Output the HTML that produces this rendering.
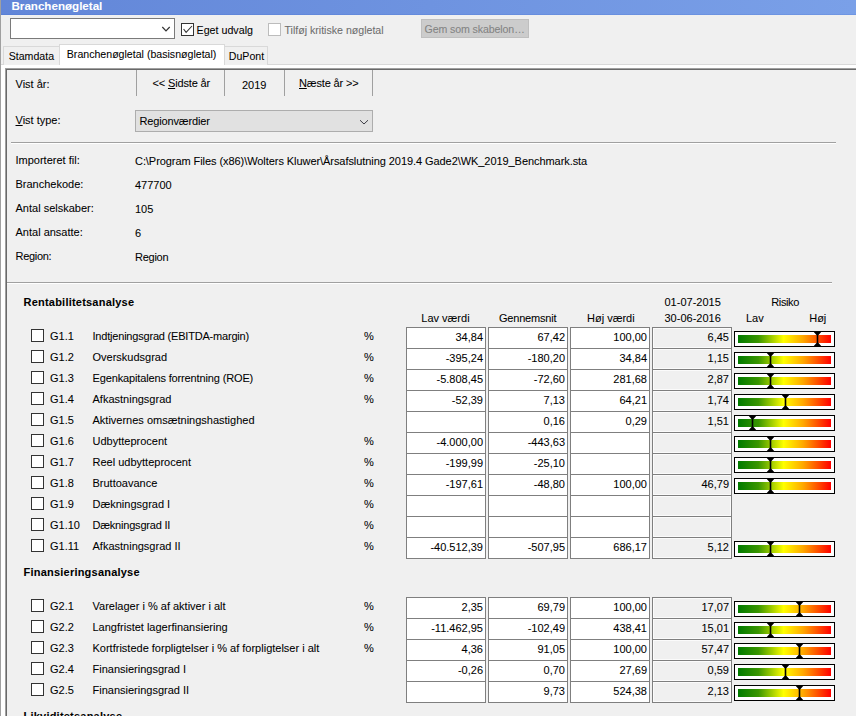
<!DOCTYPE html>
<html><head><meta charset="utf-8"><style>
html,body{margin:0;padding:0;}
body{width:856px;height:716px;overflow:hidden;position:relative;background:#f0f0f0;font-family:"Liberation Sans",sans-serif;}
.t{position:absolute;white-space:pre;-webkit-text-stroke:0.06px currentColor;}
.r{position:absolute;}
u{text-decoration:underline;text-underline-offset:1px;}
</style></head><body>
<div class="r" style="left:0px;top:0px;width:1px;height:716px;background:#a0a0a0"></div>
<div class="r" style="left:1px;top:0px;width:855px;height:15px;background:linear-gradient(to right,#6286d8,#7aa0e8)"></div>
<div class="r" style="left:1px;top:14px;width:855px;height:1px;background:linear-gradient(to right,#5a80d6,#6f96e3)"></div>
<div class="t" style="left:11.5px;top:-0.52px;font-size:11.6px;line-height:14px;color:#fff;font-weight:bold;">Branchenøgletal</div>
<div class="r" style="left:10px;top:18px;width:165px;height:21px;background:#fff;border:1px solid #7a7a7a;box-sizing:border-box"></div>
<svg class="r" style="left:161px;top:25px" width="10" height="7"><path d="M1.3 2 L5 5.8 L8.7 2" fill="none" stroke="#333" stroke-width="1.2"/></svg>
<div class="r" style="left:181px;top:23px;width:13px;height:13px;background:#fff;border:1px solid #333;box-sizing:border-box"></div>
<svg class="r" style="left:181px;top:23px" width="13" height="13"><path d="M2.6 6 L5.1 9.4 L11 3" fill="none" stroke="#333" stroke-width="1.05"/></svg>
<div class="t" style="left:196.5px;top:23.79px;font-size:10.7px;line-height:13px;color:#000;font-weight:normal;">Eget udvalg</div>
<div class="r" style="left:268px;top:23px;width:13px;height:13px;background:#fff;border:1px solid #bcbcbc;box-sizing:border-box"></div>
<div class="t" style="left:284.5px;top:23.83px;font-size:10.6px;line-height:13px;color:#6d6d6d;font-weight:normal;">Tilføj kritiske nøgletal</div>
<div class="r" style="left:421px;top:19px;width:108px;height:19px;background:#cccccc;border:1px solid #bfbfbf;box-sizing:border-box"></div>
<div class="t" style="left:424.5px;top:22.83px;font-size:10.6px;line-height:13px;color:#838383;font-weight:normal;letter-spacing:-0.1px">Gem som skabelon…</div>
<div class="r" style="left:1px;top:64px;width:855px;height:652px;background:#fff;border-top:1px solid #d9d9d9;box-sizing:border-box"></div>
<div class="r" style="left:3px;top:46px;width:57px;height:19px;background:#f0f0f0;border:1px solid #d9d9d9;border-bottom:none;box-sizing:border-box"></div>
<div class="t" style="left:8.7px;top:49.83px;font-size:10.6px;line-height:13px;color:#000;font-weight:normal;">Stamdata</div>
<div class="r" style="left:224px;top:46px;width:44px;height:19px;background:#f0f0f0;border:1px solid #d9d9d9;border-bottom:none;box-sizing:border-box"></div>
<div class="t" style="left:228.8px;top:49.83px;font-size:10.6px;line-height:13px;color:#000;font-weight:normal;">DuPont</div>
<div class="r" style="left:59px;top:44px;width:166px;height:21px;background:#fff;border:1px solid #d9d9d9;border-bottom:none;box-sizing:border-box"></div>
<div class="t" style="left:66.8px;top:47.83px;font-size:10.6px;line-height:13px;color:#000;font-weight:normal;">Branchenøgletal (basisnøgletal)</div>
<div class="r" style="left:5px;top:68px;width:851px;height:648px;background:#f0f0f0;border-top:1px solid #a0a0a0;border-left:1px solid #a0a0a0;box-sizing:border-box"></div>
<div class="r" style="left:6px;top:69px;width:850px;height:647px;border-top:1px solid #696969;border-left:1px solid #696969;box-sizing:border-box"></div>
<div class="t" style="left:15.5px;top:77.69px;font-size:11px;line-height:13px;color:#000;font-weight:normal;">Vist år:</div>
<div class="r" style="left:136px;top:70px;width:1px;height:26px;background:#a0a0a0"></div>
<div class="r" style="left:224px;top:70px;width:1px;height:26px;background:#a0a0a0"></div>
<div class="r" style="left:284px;top:70px;width:1px;height:26px;background:#a0a0a0"></div>
<div class="r" style="left:372px;top:70px;width:1px;height:26px;background:#a0a0a0"></div>
<div class="t" style="left:152.5px;top:77.19px;font-size:11px;line-height:13px;color:#000;font-weight:normal;letter-spacing:-0.15px">&lt;&lt; <u>S</u>idste år</div>
<div class="t" style="left:242px;top:78.69px;font-size:11px;line-height:13px;color:#000;font-weight:normal;">2019</div>
<div class="t" style="left:299px;top:77.19px;font-size:11px;line-height:13px;color:#000;font-weight:normal;letter-spacing:-0.15px"><u>N</u>æste år &gt;&gt;</div>
<div class="t" style="left:15.5px;top:113.69px;font-size:11px;line-height:13px;color:#000;font-weight:normal;"><u>V</u>ist type:</div>
<div class="r" style="left:135px;top:110px;width:238px;height:22px;background:#e1e1e1;border:1px solid #adadad;box-sizing:border-box"></div>
<div class="t" style="left:139.5px;top:114.69px;font-size:11px;line-height:13px;color:#000;font-weight:normal;letter-spacing:-0.15px">Regionværdier</div>
<svg class="r" style="left:358px;top:117px" width="12" height="8"><path d="M2 3.2 L6 7 L10 3.2" fill="none" stroke="#3c3c44" stroke-width="1"/></svg>
<div class="r" style="left:11px;top:142px;width:825px;height:1px;background:#a0a0a0"></div>
<div class="r" style="left:11px;top:143px;width:825px;height:1px;background:#fff"></div>
<div class="r" style="left:7px;top:282px;width:825px;height:1px;background:#a0a0a0"></div>
<div class="r" style="left:7px;top:283px;width:825px;height:1px;background:#fff"></div>
<div class="t" style="left:15.5px;top:153.69px;font-size:11px;line-height:13px;color:#000;font-weight:normal;">Importeret fil:</div>
<div class="t" style="left:135px;top:154.69px;font-size:11px;line-height:13px;color:#000;font-weight:normal;letter-spacing:-0.065px">C:\Program Files (x86)\Wolters Kluwer\Årsafslutning 2019.4 Gade2\WK_2019_Benchmark.sta</div>
<div class="t" style="left:15.5px;top:177.69px;font-size:11px;line-height:13px;color:#000;font-weight:normal;">Branchekode:</div>
<div class="t" style="left:135px;top:178.69px;font-size:11px;line-height:13px;color:#000;font-weight:normal;">477700</div>
<div class="t" style="left:15.5px;top:201.69px;font-size:11px;line-height:13px;color:#000;font-weight:normal;">Antal selskaber:</div>
<div class="t" style="left:135px;top:202.69px;font-size:11px;line-height:13px;color:#000;font-weight:normal;">105</div>
<div class="t" style="left:15.5px;top:225.69px;font-size:11px;line-height:13px;color:#000;font-weight:normal;">Antal ansatte:</div>
<div class="t" style="left:135px;top:226.69px;font-size:11px;line-height:13px;color:#000;font-weight:normal;">6</div>
<div class="t" style="left:15.5px;top:249.69px;font-size:11px;line-height:13px;color:#000;font-weight:normal;letter-spacing:-0.3px">Region:</div>
<div class="t" style="left:135px;top:250.69px;font-size:11px;line-height:13px;color:#000;font-weight:normal;letter-spacing:-0.25px">Region</div>
<div class="t" style="left:23.5px;top:295.69px;font-size:11px;line-height:13px;color:#000;font-weight:bold;letter-spacing:0.22px">Rentabilitetsanalyse</div>
<div class="t" style="left:421.3px;top:311.69px;font-size:11px;line-height:13px;color:#000;font-weight:normal;">Lav værdi</div>
<div class="t" style="left:499px;top:311.69px;font-size:11px;line-height:13px;color:#000;font-weight:normal;letter-spacing:-0.2px">Gennemsnit</div>
<div class="t" style="left:587px;top:311.69px;font-size:11px;line-height:13px;color:#000;font-weight:normal;">Høj værdi</div>
<div class="t" style="left:664.5px;top:295.69px;font-size:11px;line-height:13px;color:#000;font-weight:normal;">01-07-2015</div>
<div class="t" style="left:664.5px;top:311.69px;font-size:11px;line-height:13px;color:#000;font-weight:normal;">30-06-2016</div>
<div class="t" style="left:771.3px;top:295.69px;font-size:11px;line-height:13px;color:#000;font-weight:normal;letter-spacing:-0.4px">Risiko</div>
<div class="t" style="left:746px;top:311.69px;font-size:11px;line-height:13px;color:#000;font-weight:normal;">Lav</div>
<div class="t" style="left:809.2px;top:311.69px;font-size:11px;line-height:13px;color:#000;font-weight:normal;">Høj</div>
<div class="r" style="left:31px;top:329px;width:13px;height:13px;background:#fff;border:1px solid #333;box-sizing:border-box"></div>
<div class="t" style="left:50px;top:329.69px;font-size:11px;line-height:13px;color:#000;font-weight:normal;">G1.1</div>
<div class="t" style="left:92.5px;top:329.69px;font-size:11px;line-height:13px;color:#000;font-weight:normal;letter-spacing:-0.2px">Indtjeningsgrad (EBITDA-margin)</div>
<div class="t" style="left:364px;top:329.69px;font-size:11px;line-height:13px;color:#000;font-weight:normal;">%</div>
<div class="r" style="left:406px;top:327px;width:80px;height:22px;background:#fff;border:1px solid #7f7f7f;box-sizing:border-box"></div>
<div class="t" style="right:373px;top:330.69px;font-size:11px;line-height:13px;color:#000;font-weight:normal;text-align:right;">34,84</div>
<div class="r" style="left:488px;top:327px;width:80px;height:22px;background:#fff;border:1px solid #7f7f7f;box-sizing:border-box"></div>
<div class="t" style="right:291px;top:330.69px;font-size:11px;line-height:13px;color:#000;font-weight:normal;text-align:right;">67,42</div>
<div class="r" style="left:570px;top:327px;width:80px;height:22px;background:#fff;border:1px solid #7f7f7f;box-sizing:border-box"></div>
<div class="t" style="right:209px;top:330.69px;font-size:11px;line-height:13px;color:#000;font-weight:normal;text-align:right;">100,00</div>
<div class="r" style="left:652px;top:327px;width:80px;height:22px;background:#f0f0f0;border:1px solid #7f7f7f;box-sizing:border-box;box-shadow:inset 0 0 0 1px #fbfbfb"></div>
<div class="t" style="right:127px;top:330.69px;font-size:11px;line-height:13px;color:#000;font-weight:normal;text-align:right;">6,45</div>
<div class="r" style="left:734px;top:331px;width:101px;height:16px;background:#fff;border:1px solid #000;box-sizing:border-box"></div>
<div class="r" style="left:738px;top:335px;width:93px;height:8px;background:linear-gradient(to right,#007a00,#3a9600 22%,#a6d000 37%,#ffff00 49%,#ffa800 70%,#ff0000)"></div>
<svg class="r" style="left:812px;top:332px" width="11" height="14"><path d="M1.8 0 H9.2 L6.3 3.2 V10.8 L9.2 14 H1.8 L4.7 10.8 V3.2 Z" fill="#000"/></svg>
<div class="r" style="left:31px;top:350px;width:13px;height:13px;background:#fff;border:1px solid #333;box-sizing:border-box"></div>
<div class="t" style="left:50px;top:350.69px;font-size:11px;line-height:13px;color:#000;font-weight:normal;">G1.2</div>
<div class="t" style="left:92.5px;top:350.69px;font-size:11px;line-height:13px;color:#000;font-weight:normal;">Overskudsgrad</div>
<div class="t" style="left:364px;top:350.69px;font-size:11px;line-height:13px;color:#000;font-weight:normal;">%</div>
<div class="r" style="left:406px;top:348px;width:80px;height:22px;background:#fff;border:1px solid #7f7f7f;box-sizing:border-box"></div>
<div class="t" style="right:373px;top:351.69px;font-size:11px;line-height:13px;color:#000;font-weight:normal;text-align:right;">-395,24</div>
<div class="r" style="left:488px;top:348px;width:80px;height:22px;background:#fff;border:1px solid #7f7f7f;box-sizing:border-box"></div>
<div class="t" style="right:291px;top:351.69px;font-size:11px;line-height:13px;color:#000;font-weight:normal;text-align:right;">-180,20</div>
<div class="r" style="left:570px;top:348px;width:80px;height:22px;background:#fff;border:1px solid #7f7f7f;box-sizing:border-box"></div>
<div class="t" style="right:209px;top:351.69px;font-size:11px;line-height:13px;color:#000;font-weight:normal;text-align:right;">34,84</div>
<div class="r" style="left:652px;top:348px;width:80px;height:22px;background:#f0f0f0;border:1px solid #7f7f7f;box-sizing:border-box;box-shadow:inset 0 0 0 1px #fbfbfb"></div>
<div class="t" style="right:127px;top:351.69px;font-size:11px;line-height:13px;color:#000;font-weight:normal;text-align:right;">1,15</div>
<div class="r" style="left:734px;top:352px;width:101px;height:16px;background:#fff;border:1px solid #000;box-sizing:border-box"></div>
<div class="r" style="left:738px;top:356px;width:93px;height:8px;background:linear-gradient(to right,#007a00,#3a9600 22%,#a6d000 37%,#ffff00 49%,#ffa800 70%,#ff0000)"></div>
<svg class="r" style="left:765px;top:353px" width="11" height="14"><path d="M1.8 0 H9.2 L6.3 3.2 V10.8 L9.2 14 H1.8 L4.7 10.8 V3.2 Z" fill="#000"/></svg>
<div class="r" style="left:31px;top:371px;width:13px;height:13px;background:#fff;border:1px solid #333;box-sizing:border-box"></div>
<div class="t" style="left:50px;top:371.69px;font-size:11px;line-height:13px;color:#000;font-weight:normal;">G1.3</div>
<div class="t" style="left:92.5px;top:371.69px;font-size:11px;line-height:13px;color:#000;font-weight:normal;letter-spacing:-0.14px">Egenkapitalens forrentning (ROE)</div>
<div class="t" style="left:364px;top:371.69px;font-size:11px;line-height:13px;color:#000;font-weight:normal;">%</div>
<div class="r" style="left:406px;top:369px;width:80px;height:22px;background:#fff;border:1px solid #7f7f7f;box-sizing:border-box"></div>
<div class="t" style="right:373px;top:372.69px;font-size:11px;line-height:13px;color:#000;font-weight:normal;text-align:right;">-5.808,45</div>
<div class="r" style="left:488px;top:369px;width:80px;height:22px;background:#fff;border:1px solid #7f7f7f;box-sizing:border-box"></div>
<div class="t" style="right:291px;top:372.69px;font-size:11px;line-height:13px;color:#000;font-weight:normal;text-align:right;">-72,60</div>
<div class="r" style="left:570px;top:369px;width:80px;height:22px;background:#fff;border:1px solid #7f7f7f;box-sizing:border-box"></div>
<div class="t" style="right:209px;top:372.69px;font-size:11px;line-height:13px;color:#000;font-weight:normal;text-align:right;">281,68</div>
<div class="r" style="left:652px;top:369px;width:80px;height:22px;background:#f0f0f0;border:1px solid #7f7f7f;box-sizing:border-box;box-shadow:inset 0 0 0 1px #fbfbfb"></div>
<div class="t" style="right:127px;top:372.69px;font-size:11px;line-height:13px;color:#000;font-weight:normal;text-align:right;">2,87</div>
<div class="r" style="left:734px;top:373px;width:101px;height:16px;background:#fff;border:1px solid #000;box-sizing:border-box"></div>
<div class="r" style="left:738px;top:377px;width:93px;height:8px;background:linear-gradient(to right,#007a00,#3a9600 22%,#a6d000 37%,#ffff00 49%,#ffa800 70%,#ff0000)"></div>
<svg class="r" style="left:765px;top:374px" width="11" height="14"><path d="M1.8 0 H9.2 L6.3 3.2 V10.8 L9.2 14 H1.8 L4.7 10.8 V3.2 Z" fill="#000"/></svg>
<div class="r" style="left:31px;top:392px;width:13px;height:13px;background:#fff;border:1px solid #333;box-sizing:border-box"></div>
<div class="t" style="left:50px;top:392.69px;font-size:11px;line-height:13px;color:#000;font-weight:normal;">G1.4</div>
<div class="t" style="left:92.5px;top:392.69px;font-size:11px;line-height:13px;color:#000;font-weight:normal;">Afkastningsgrad</div>
<div class="t" style="left:364px;top:392.69px;font-size:11px;line-height:13px;color:#000;font-weight:normal;">%</div>
<div class="r" style="left:406px;top:390px;width:80px;height:22px;background:#fff;border:1px solid #7f7f7f;box-sizing:border-box"></div>
<div class="t" style="right:373px;top:393.69px;font-size:11px;line-height:13px;color:#000;font-weight:normal;text-align:right;">-52,39</div>
<div class="r" style="left:488px;top:390px;width:80px;height:22px;background:#fff;border:1px solid #7f7f7f;box-sizing:border-box"></div>
<div class="t" style="right:291px;top:393.69px;font-size:11px;line-height:13px;color:#000;font-weight:normal;text-align:right;">7,13</div>
<div class="r" style="left:570px;top:390px;width:80px;height:22px;background:#fff;border:1px solid #7f7f7f;box-sizing:border-box"></div>
<div class="t" style="right:209px;top:393.69px;font-size:11px;line-height:13px;color:#000;font-weight:normal;text-align:right;">64,21</div>
<div class="r" style="left:652px;top:390px;width:80px;height:22px;background:#f0f0f0;border:1px solid #7f7f7f;box-sizing:border-box;box-shadow:inset 0 0 0 1px #fbfbfb"></div>
<div class="t" style="right:127px;top:393.69px;font-size:11px;line-height:13px;color:#000;font-weight:normal;text-align:right;">1,74</div>
<div class="r" style="left:734px;top:394px;width:101px;height:16px;background:#fff;border:1px solid #000;box-sizing:border-box"></div>
<div class="r" style="left:738px;top:398px;width:93px;height:8px;background:linear-gradient(to right,#007a00,#3a9600 22%,#a6d000 37%,#ffff00 49%,#ffa800 70%,#ff0000)"></div>
<svg class="r" style="left:780px;top:395px" width="11" height="14"><path d="M1.8 0 H9.2 L6.3 3.2 V10.8 L9.2 14 H1.8 L4.7 10.8 V3.2 Z" fill="#000"/></svg>
<div class="r" style="left:31px;top:413px;width:13px;height:13px;background:#fff;border:1px solid #333;box-sizing:border-box"></div>
<div class="t" style="left:50px;top:413.69px;font-size:11px;line-height:13px;color:#000;font-weight:normal;">G1.5</div>
<div class="t" style="left:92.5px;top:413.69px;font-size:11px;line-height:13px;color:#000;font-weight:normal;">Aktivernes omsætningshastighed</div>
<div class="r" style="left:406px;top:411px;width:80px;height:22px;background:#fff;border:1px solid #7f7f7f;box-sizing:border-box"></div>
<div class="r" style="left:488px;top:411px;width:80px;height:22px;background:#fff;border:1px solid #7f7f7f;box-sizing:border-box"></div>
<div class="t" style="right:291px;top:414.69px;font-size:11px;line-height:13px;color:#000;font-weight:normal;text-align:right;">0,16</div>
<div class="r" style="left:570px;top:411px;width:80px;height:22px;background:#fff;border:1px solid #7f7f7f;box-sizing:border-box"></div>
<div class="t" style="right:209px;top:414.69px;font-size:11px;line-height:13px;color:#000;font-weight:normal;text-align:right;">0,29</div>
<div class="r" style="left:652px;top:411px;width:80px;height:22px;background:#f0f0f0;border:1px solid #7f7f7f;box-sizing:border-box;box-shadow:inset 0 0 0 1px #fbfbfb"></div>
<div class="t" style="right:127px;top:414.69px;font-size:11px;line-height:13px;color:#000;font-weight:normal;text-align:right;">1,51</div>
<div class="r" style="left:734px;top:415px;width:101px;height:16px;background:#fff;border:1px solid #000;box-sizing:border-box"></div>
<div class="r" style="left:738px;top:419px;width:93px;height:8px;background:linear-gradient(to right,#007a00,#3a9600 22%,#a6d000 37%,#ffff00 49%,#ffa800 70%,#ff0000)"></div>
<svg class="r" style="left:747px;top:416px" width="11" height="14"><path d="M1.8 0 H9.2 L6.3 3.2 V10.8 L9.2 14 H1.8 L4.7 10.8 V3.2 Z" fill="#000"/></svg>
<div class="r" style="left:31px;top:434px;width:13px;height:13px;background:#fff;border:1px solid #333;box-sizing:border-box"></div>
<div class="t" style="left:50px;top:434.69px;font-size:11px;line-height:13px;color:#000;font-weight:normal;">G1.6</div>
<div class="t" style="left:92.5px;top:434.69px;font-size:11px;line-height:13px;color:#000;font-weight:normal;">Udbytteprocent</div>
<div class="t" style="left:364px;top:434.69px;font-size:11px;line-height:13px;color:#000;font-weight:normal;">%</div>
<div class="r" style="left:406px;top:432px;width:80px;height:22px;background:#fff;border:1px solid #7f7f7f;box-sizing:border-box"></div>
<div class="t" style="right:373px;top:435.69px;font-size:11px;line-height:13px;color:#000;font-weight:normal;text-align:right;">-4.000,00</div>
<div class="r" style="left:488px;top:432px;width:80px;height:22px;background:#fff;border:1px solid #7f7f7f;box-sizing:border-box"></div>
<div class="t" style="right:291px;top:435.69px;font-size:11px;line-height:13px;color:#000;font-weight:normal;text-align:right;">-443,63</div>
<div class="r" style="left:570px;top:432px;width:80px;height:22px;background:#fff;border:1px solid #7f7f7f;box-sizing:border-box"></div>
<div class="r" style="left:652px;top:432px;width:80px;height:22px;background:#f0f0f0;border:1px solid #7f7f7f;box-sizing:border-box;box-shadow:inset 0 0 0 1px #fbfbfb"></div>
<div class="r" style="left:734px;top:436px;width:101px;height:16px;background:#fff;border:1px solid #000;box-sizing:border-box"></div>
<div class="r" style="left:738px;top:440px;width:93px;height:8px;background:linear-gradient(to right,#007a00,#3a9600 22%,#a6d000 37%,#ffff00 49%,#ffa800 70%,#ff0000)"></div>
<svg class="r" style="left:765px;top:437px" width="11" height="14"><path d="M1.8 0 H9.2 L6.3 3.2 V10.8 L9.2 14 H1.8 L4.7 10.8 V3.2 Z" fill="#000"/></svg>
<div class="r" style="left:31px;top:455px;width:13px;height:13px;background:#fff;border:1px solid #333;box-sizing:border-box"></div>
<div class="t" style="left:50px;top:455.69px;font-size:11px;line-height:13px;color:#000;font-weight:normal;">G1.7</div>
<div class="t" style="left:92.5px;top:455.69px;font-size:11px;line-height:13px;color:#000;font-weight:normal;">Reel udbytteprocent</div>
<div class="t" style="left:364px;top:455.69px;font-size:11px;line-height:13px;color:#000;font-weight:normal;">%</div>
<div class="r" style="left:406px;top:453px;width:80px;height:22px;background:#fff;border:1px solid #7f7f7f;box-sizing:border-box"></div>
<div class="t" style="right:373px;top:456.69px;font-size:11px;line-height:13px;color:#000;font-weight:normal;text-align:right;">-199,99</div>
<div class="r" style="left:488px;top:453px;width:80px;height:22px;background:#fff;border:1px solid #7f7f7f;box-sizing:border-box"></div>
<div class="t" style="right:291px;top:456.69px;font-size:11px;line-height:13px;color:#000;font-weight:normal;text-align:right;">-25,10</div>
<div class="r" style="left:570px;top:453px;width:80px;height:22px;background:#fff;border:1px solid #7f7f7f;box-sizing:border-box"></div>
<div class="r" style="left:652px;top:453px;width:80px;height:22px;background:#f0f0f0;border:1px solid #7f7f7f;box-sizing:border-box;box-shadow:inset 0 0 0 1px #fbfbfb"></div>
<div class="r" style="left:734px;top:457px;width:101px;height:16px;background:#fff;border:1px solid #000;box-sizing:border-box"></div>
<div class="r" style="left:738px;top:461px;width:93px;height:8px;background:linear-gradient(to right,#007a00,#3a9600 22%,#a6d000 37%,#ffff00 49%,#ffa800 70%,#ff0000)"></div>
<svg class="r" style="left:765px;top:458px" width="11" height="14"><path d="M1.8 0 H9.2 L6.3 3.2 V10.8 L9.2 14 H1.8 L4.7 10.8 V3.2 Z" fill="#000"/></svg>
<div class="r" style="left:31px;top:476px;width:13px;height:13px;background:#fff;border:1px solid #333;box-sizing:border-box"></div>
<div class="t" style="left:50px;top:476.69px;font-size:11px;line-height:13px;color:#000;font-weight:normal;">G1.8</div>
<div class="t" style="left:92.5px;top:476.69px;font-size:11px;line-height:13px;color:#000;font-weight:normal;">Bruttoavance</div>
<div class="t" style="left:364px;top:476.69px;font-size:11px;line-height:13px;color:#000;font-weight:normal;">%</div>
<div class="r" style="left:406px;top:474px;width:80px;height:22px;background:#fff;border:1px solid #7f7f7f;box-sizing:border-box"></div>
<div class="t" style="right:373px;top:477.69px;font-size:11px;line-height:13px;color:#000;font-weight:normal;text-align:right;">-197,61</div>
<div class="r" style="left:488px;top:474px;width:80px;height:22px;background:#fff;border:1px solid #7f7f7f;box-sizing:border-box"></div>
<div class="t" style="right:291px;top:477.69px;font-size:11px;line-height:13px;color:#000;font-weight:normal;text-align:right;">-48,80</div>
<div class="r" style="left:570px;top:474px;width:80px;height:22px;background:#fff;border:1px solid #7f7f7f;box-sizing:border-box"></div>
<div class="t" style="right:209px;top:477.69px;font-size:11px;line-height:13px;color:#000;font-weight:normal;text-align:right;">100,00</div>
<div class="r" style="left:652px;top:474px;width:80px;height:22px;background:#f0f0f0;border:1px solid #7f7f7f;box-sizing:border-box;box-shadow:inset 0 0 0 1px #fbfbfb"></div>
<div class="t" style="right:127px;top:477.69px;font-size:11px;line-height:13px;color:#000;font-weight:normal;text-align:right;">46,79</div>
<div class="r" style="left:734px;top:478px;width:101px;height:16px;background:#fff;border:1px solid #000;box-sizing:border-box"></div>
<div class="r" style="left:738px;top:482px;width:93px;height:8px;background:linear-gradient(to right,#007a00,#3a9600 22%,#a6d000 37%,#ffff00 49%,#ffa800 70%,#ff0000)"></div>
<svg class="r" style="left:765px;top:479px" width="11" height="14"><path d="M1.8 0 H9.2 L6.3 3.2 V10.8 L9.2 14 H1.8 L4.7 10.8 V3.2 Z" fill="#000"/></svg>
<div class="r" style="left:31px;top:497px;width:13px;height:13px;background:#fff;border:1px solid #333;box-sizing:border-box"></div>
<div class="t" style="left:50px;top:497.69px;font-size:11px;line-height:13px;color:#000;font-weight:normal;">G1.9</div>
<div class="t" style="left:92.5px;top:497.69px;font-size:11px;line-height:13px;color:#000;font-weight:normal;">Dækningsgrad I</div>
<div class="t" style="left:364px;top:497.69px;font-size:11px;line-height:13px;color:#000;font-weight:normal;">%</div>
<div class="r" style="left:406px;top:495px;width:80px;height:22px;background:#fff;border:1px solid #7f7f7f;box-sizing:border-box"></div>
<div class="r" style="left:488px;top:495px;width:80px;height:22px;background:#fff;border:1px solid #7f7f7f;box-sizing:border-box"></div>
<div class="r" style="left:570px;top:495px;width:80px;height:22px;background:#fff;border:1px solid #7f7f7f;box-sizing:border-box"></div>
<div class="r" style="left:652px;top:495px;width:80px;height:22px;background:#f0f0f0;border:1px solid #7f7f7f;box-sizing:border-box;box-shadow:inset 0 0 0 1px #fbfbfb"></div>
<div class="r" style="left:31px;top:518px;width:13px;height:13px;background:#fff;border:1px solid #333;box-sizing:border-box"></div>
<div class="t" style="left:50px;top:518.69px;font-size:11px;line-height:13px;color:#000;font-weight:normal;">G1.10</div>
<div class="t" style="left:92.5px;top:518.69px;font-size:11px;line-height:13px;color:#000;font-weight:normal;letter-spacing:-0.2px">Dækningsgrad II</div>
<div class="t" style="left:364px;top:518.69px;font-size:11px;line-height:13px;color:#000;font-weight:normal;">%</div>
<div class="r" style="left:406px;top:516px;width:80px;height:22px;background:#fff;border:1px solid #7f7f7f;box-sizing:border-box"></div>
<div class="r" style="left:488px;top:516px;width:80px;height:22px;background:#fff;border:1px solid #7f7f7f;box-sizing:border-box"></div>
<div class="r" style="left:570px;top:516px;width:80px;height:22px;background:#fff;border:1px solid #7f7f7f;box-sizing:border-box"></div>
<div class="r" style="left:652px;top:516px;width:80px;height:22px;background:#f0f0f0;border:1px solid #7f7f7f;box-sizing:border-box;box-shadow:inset 0 0 0 1px #fbfbfb"></div>
<div class="r" style="left:31px;top:539px;width:13px;height:13px;background:#fff;border:1px solid #333;box-sizing:border-box"></div>
<div class="t" style="left:50px;top:539.69px;font-size:11px;line-height:13px;color:#000;font-weight:normal;">G1.11</div>
<div class="t" style="left:92.5px;top:539.69px;font-size:11px;line-height:13px;color:#000;font-weight:normal;">Afkastningsgrad II</div>
<div class="t" style="left:364px;top:539.69px;font-size:11px;line-height:13px;color:#000;font-weight:normal;">%</div>
<div class="r" style="left:406px;top:537px;width:80px;height:22px;background:#fff;border:1px solid #7f7f7f;box-sizing:border-box"></div>
<div class="t" style="right:373px;top:540.69px;font-size:11px;line-height:13px;color:#000;font-weight:normal;text-align:right;">-40.512,39</div>
<div class="r" style="left:488px;top:537px;width:80px;height:22px;background:#fff;border:1px solid #7f7f7f;box-sizing:border-box"></div>
<div class="t" style="right:291px;top:540.69px;font-size:11px;line-height:13px;color:#000;font-weight:normal;text-align:right;">-507,95</div>
<div class="r" style="left:570px;top:537px;width:80px;height:22px;background:#fff;border:1px solid #7f7f7f;box-sizing:border-box"></div>
<div class="t" style="right:209px;top:540.69px;font-size:11px;line-height:13px;color:#000;font-weight:normal;text-align:right;">686,17</div>
<div class="r" style="left:652px;top:537px;width:80px;height:22px;background:#f0f0f0;border:1px solid #7f7f7f;box-sizing:border-box;box-shadow:inset 0 0 0 1px #fbfbfb"></div>
<div class="t" style="right:127px;top:540.69px;font-size:11px;line-height:13px;color:#000;font-weight:normal;text-align:right;">5,12</div>
<div class="r" style="left:734px;top:541px;width:101px;height:16px;background:#fff;border:1px solid #000;box-sizing:border-box"></div>
<div class="r" style="left:738px;top:545px;width:93px;height:8px;background:linear-gradient(to right,#007a00,#3a9600 22%,#a6d000 37%,#ffff00 49%,#ffa800 70%,#ff0000)"></div>
<svg class="r" style="left:765px;top:542px" width="11" height="14"><path d="M1.8 0 H9.2 L6.3 3.2 V10.8 L9.2 14 H1.8 L4.7 10.8 V3.2 Z" fill="#000"/></svg>
<div class="t" style="left:23.5px;top:565.69px;font-size:11px;line-height:13px;color:#000;font-weight:bold;letter-spacing:0.22px">Finansieringsanalyse</div>
<div class="r" style="left:31px;top:599px;width:13px;height:13px;background:#fff;border:1px solid #333;box-sizing:border-box"></div>
<div class="t" style="left:50px;top:599.69px;font-size:11px;line-height:13px;color:#000;font-weight:normal;">G2.1</div>
<div class="t" style="left:92.5px;top:599.69px;font-size:11px;line-height:13px;color:#000;font-weight:normal;">Varelager i % af aktiver i alt</div>
<div class="t" style="left:364px;top:599.69px;font-size:11px;line-height:13px;color:#000;font-weight:normal;">%</div>
<div class="r" style="left:406px;top:597px;width:80px;height:22px;background:#fff;border:1px solid #7f7f7f;box-sizing:border-box"></div>
<div class="t" style="right:373px;top:600.69px;font-size:11px;line-height:13px;color:#000;font-weight:normal;text-align:right;">2,35</div>
<div class="r" style="left:488px;top:597px;width:80px;height:22px;background:#fff;border:1px solid #7f7f7f;box-sizing:border-box"></div>
<div class="t" style="right:291px;top:600.69px;font-size:11px;line-height:13px;color:#000;font-weight:normal;text-align:right;">69,79</div>
<div class="r" style="left:570px;top:597px;width:80px;height:22px;background:#fff;border:1px solid #7f7f7f;box-sizing:border-box"></div>
<div class="t" style="right:209px;top:600.69px;font-size:11px;line-height:13px;color:#000;font-weight:normal;text-align:right;">100,00</div>
<div class="r" style="left:652px;top:597px;width:80px;height:22px;background:#f0f0f0;border:1px solid #7f7f7f;box-sizing:border-box;box-shadow:inset 0 0 0 1px #fbfbfb"></div>
<div class="t" style="right:127px;top:600.69px;font-size:11px;line-height:13px;color:#000;font-weight:normal;text-align:right;">17,07</div>
<div class="r" style="left:734px;top:601px;width:101px;height:16px;background:#fff;border:1px solid #000;box-sizing:border-box"></div>
<div class="r" style="left:738px;top:605px;width:93px;height:8px;background:linear-gradient(to right,#007a00,#3a9600 22%,#a6d000 37%,#ffff00 49%,#ffa800 70%,#ff0000)"></div>
<svg class="r" style="left:794px;top:602px" width="11" height="14"><path d="M1.8 0 H9.2 L6.3 3.2 V10.8 L9.2 14 H1.8 L4.7 10.8 V3.2 Z" fill="#000"/></svg>
<div class="r" style="left:31px;top:620px;width:13px;height:13px;background:#fff;border:1px solid #333;box-sizing:border-box"></div>
<div class="t" style="left:50px;top:620.69px;font-size:11px;line-height:13px;color:#000;font-weight:normal;">G2.2</div>
<div class="t" style="left:92.5px;top:620.69px;font-size:11px;line-height:13px;color:#000;font-weight:normal;">Langfristet lagerfinansiering</div>
<div class="t" style="left:364px;top:620.69px;font-size:11px;line-height:13px;color:#000;font-weight:normal;">%</div>
<div class="r" style="left:406px;top:618px;width:80px;height:22px;background:#fff;border:1px solid #7f7f7f;box-sizing:border-box"></div>
<div class="t" style="right:373px;top:621.69px;font-size:11px;line-height:13px;color:#000;font-weight:normal;text-align:right;">-11.462,95</div>
<div class="r" style="left:488px;top:618px;width:80px;height:22px;background:#fff;border:1px solid #7f7f7f;box-sizing:border-box"></div>
<div class="t" style="right:291px;top:621.69px;font-size:11px;line-height:13px;color:#000;font-weight:normal;text-align:right;">-102,49</div>
<div class="r" style="left:570px;top:618px;width:80px;height:22px;background:#fff;border:1px solid #7f7f7f;box-sizing:border-box"></div>
<div class="t" style="right:209px;top:621.69px;font-size:11px;line-height:13px;color:#000;font-weight:normal;text-align:right;">438,41</div>
<div class="r" style="left:652px;top:618px;width:80px;height:22px;background:#f0f0f0;border:1px solid #7f7f7f;box-sizing:border-box;box-shadow:inset 0 0 0 1px #fbfbfb"></div>
<div class="t" style="right:127px;top:621.69px;font-size:11px;line-height:13px;color:#000;font-weight:normal;text-align:right;">15,01</div>
<div class="r" style="left:734px;top:622px;width:101px;height:16px;background:#fff;border:1px solid #000;box-sizing:border-box"></div>
<div class="r" style="left:738px;top:626px;width:93px;height:8px;background:linear-gradient(to right,#007a00,#3a9600 22%,#a6d000 37%,#ffff00 49%,#ffa800 70%,#ff0000)"></div>
<svg class="r" style="left:765px;top:623px" width="11" height="14"><path d="M1.8 0 H9.2 L6.3 3.2 V10.8 L9.2 14 H1.8 L4.7 10.8 V3.2 Z" fill="#000"/></svg>
<div class="r" style="left:31px;top:641px;width:13px;height:13px;background:#fff;border:1px solid #333;box-sizing:border-box"></div>
<div class="t" style="left:50px;top:641.69px;font-size:11px;line-height:13px;color:#000;font-weight:normal;">G2.3</div>
<div class="t" style="left:92.5px;top:641.69px;font-size:11px;line-height:13px;color:#000;font-weight:normal;">Kortfristede forpligtelser i % af forpligtelser i alt</div>
<div class="t" style="left:364px;top:641.69px;font-size:11px;line-height:13px;color:#000;font-weight:normal;">%</div>
<div class="r" style="left:406px;top:639px;width:80px;height:22px;background:#fff;border:1px solid #7f7f7f;box-sizing:border-box"></div>
<div class="t" style="right:373px;top:642.69px;font-size:11px;line-height:13px;color:#000;font-weight:normal;text-align:right;">4,36</div>
<div class="r" style="left:488px;top:639px;width:80px;height:22px;background:#fff;border:1px solid #7f7f7f;box-sizing:border-box"></div>
<div class="t" style="right:291px;top:642.69px;font-size:11px;line-height:13px;color:#000;font-weight:normal;text-align:right;">91,05</div>
<div class="r" style="left:570px;top:639px;width:80px;height:22px;background:#fff;border:1px solid #7f7f7f;box-sizing:border-box"></div>
<div class="t" style="right:209px;top:642.69px;font-size:11px;line-height:13px;color:#000;font-weight:normal;text-align:right;">100,00</div>
<div class="r" style="left:652px;top:639px;width:80px;height:22px;background:#f0f0f0;border:1px solid #7f7f7f;box-sizing:border-box;box-shadow:inset 0 0 0 1px #fbfbfb"></div>
<div class="t" style="right:127px;top:642.69px;font-size:11px;line-height:13px;color:#000;font-weight:normal;text-align:right;">57,47</div>
<div class="r" style="left:734px;top:643px;width:101px;height:16px;background:#fff;border:1px solid #000;box-sizing:border-box"></div>
<div class="r" style="left:738px;top:647px;width:93px;height:8px;background:linear-gradient(to right,#007a00,#3a9600 22%,#a6d000 37%,#ffff00 49%,#ffa800 70%,#ff0000)"></div>
<svg class="r" style="left:794px;top:644px" width="11" height="14"><path d="M1.8 0 H9.2 L6.3 3.2 V10.8 L9.2 14 H1.8 L4.7 10.8 V3.2 Z" fill="#000"/></svg>
<div class="r" style="left:31px;top:662px;width:13px;height:13px;background:#fff;border:1px solid #333;box-sizing:border-box"></div>
<div class="t" style="left:50px;top:662.69px;font-size:11px;line-height:13px;color:#000;font-weight:normal;">G2.4</div>
<div class="t" style="left:92.5px;top:662.69px;font-size:11px;line-height:13px;color:#000;font-weight:normal;">Finansieringsgrad I</div>
<div class="r" style="left:406px;top:660px;width:80px;height:22px;background:#fff;border:1px solid #7f7f7f;box-sizing:border-box"></div>
<div class="t" style="right:373px;top:663.69px;font-size:11px;line-height:13px;color:#000;font-weight:normal;text-align:right;">-0,26</div>
<div class="r" style="left:488px;top:660px;width:80px;height:22px;background:#fff;border:1px solid #7f7f7f;box-sizing:border-box"></div>
<div class="t" style="right:291px;top:663.69px;font-size:11px;line-height:13px;color:#000;font-weight:normal;text-align:right;">0,70</div>
<div class="r" style="left:570px;top:660px;width:80px;height:22px;background:#fff;border:1px solid #7f7f7f;box-sizing:border-box"></div>
<div class="t" style="right:209px;top:663.69px;font-size:11px;line-height:13px;color:#000;font-weight:normal;text-align:right;">27,69</div>
<div class="r" style="left:652px;top:660px;width:80px;height:22px;background:#f0f0f0;border:1px solid #7f7f7f;box-sizing:border-box;box-shadow:inset 0 0 0 1px #fbfbfb"></div>
<div class="t" style="right:127px;top:663.69px;font-size:11px;line-height:13px;color:#000;font-weight:normal;text-align:right;">0,59</div>
<div class="r" style="left:734px;top:664px;width:101px;height:16px;background:#fff;border:1px solid #000;box-sizing:border-box"></div>
<div class="r" style="left:738px;top:668px;width:93px;height:8px;background:linear-gradient(to right,#007a00,#3a9600 22%,#a6d000 37%,#ffff00 49%,#ffa800 70%,#ff0000)"></div>
<svg class="r" style="left:780px;top:665px" width="11" height="14"><path d="M1.8 0 H9.2 L6.3 3.2 V10.8 L9.2 14 H1.8 L4.7 10.8 V3.2 Z" fill="#000"/></svg>
<div class="r" style="left:31px;top:683px;width:13px;height:13px;background:#fff;border:1px solid #333;box-sizing:border-box"></div>
<div class="t" style="left:50px;top:683.69px;font-size:11px;line-height:13px;color:#000;font-weight:normal;">G2.5</div>
<div class="t" style="left:92.5px;top:683.69px;font-size:11px;line-height:13px;color:#000;font-weight:normal;">Finansieringsgrad II</div>
<div class="r" style="left:406px;top:681px;width:80px;height:22px;background:#fff;border:1px solid #7f7f7f;box-sizing:border-box"></div>
<div class="r" style="left:488px;top:681px;width:80px;height:22px;background:#fff;border:1px solid #7f7f7f;box-sizing:border-box"></div>
<div class="t" style="right:291px;top:684.69px;font-size:11px;line-height:13px;color:#000;font-weight:normal;text-align:right;">9,73</div>
<div class="r" style="left:570px;top:681px;width:80px;height:22px;background:#fff;border:1px solid #7f7f7f;box-sizing:border-box"></div>
<div class="t" style="right:209px;top:684.69px;font-size:11px;line-height:13px;color:#000;font-weight:normal;text-align:right;">524,38</div>
<div class="r" style="left:652px;top:681px;width:80px;height:22px;background:#f0f0f0;border:1px solid #7f7f7f;box-sizing:border-box;box-shadow:inset 0 0 0 1px #fbfbfb"></div>
<div class="t" style="right:127px;top:684.69px;font-size:11px;line-height:13px;color:#000;font-weight:normal;text-align:right;">2,13</div>
<div class="r" style="left:734px;top:685px;width:101px;height:16px;background:#fff;border:1px solid #000;box-sizing:border-box"></div>
<div class="r" style="left:738px;top:689px;width:93px;height:8px;background:linear-gradient(to right,#007a00,#3a9600 22%,#a6d000 37%,#ffff00 49%,#ffa800 70%,#ff0000)"></div>
<svg class="r" style="left:794px;top:686px" width="11" height="14"><path d="M1.8 0 H9.2 L6.3 3.2 V10.8 L9.2 14 H1.8 L4.7 10.8 V3.2 Z" fill="#000"/></svg>
<div class="t" style="left:23.5px;top:709.69px;font-size:11px;line-height:13px;color:#000;font-weight:bold;letter-spacing:0.22px">Likviditetsanalyse</div>
</body></html>
